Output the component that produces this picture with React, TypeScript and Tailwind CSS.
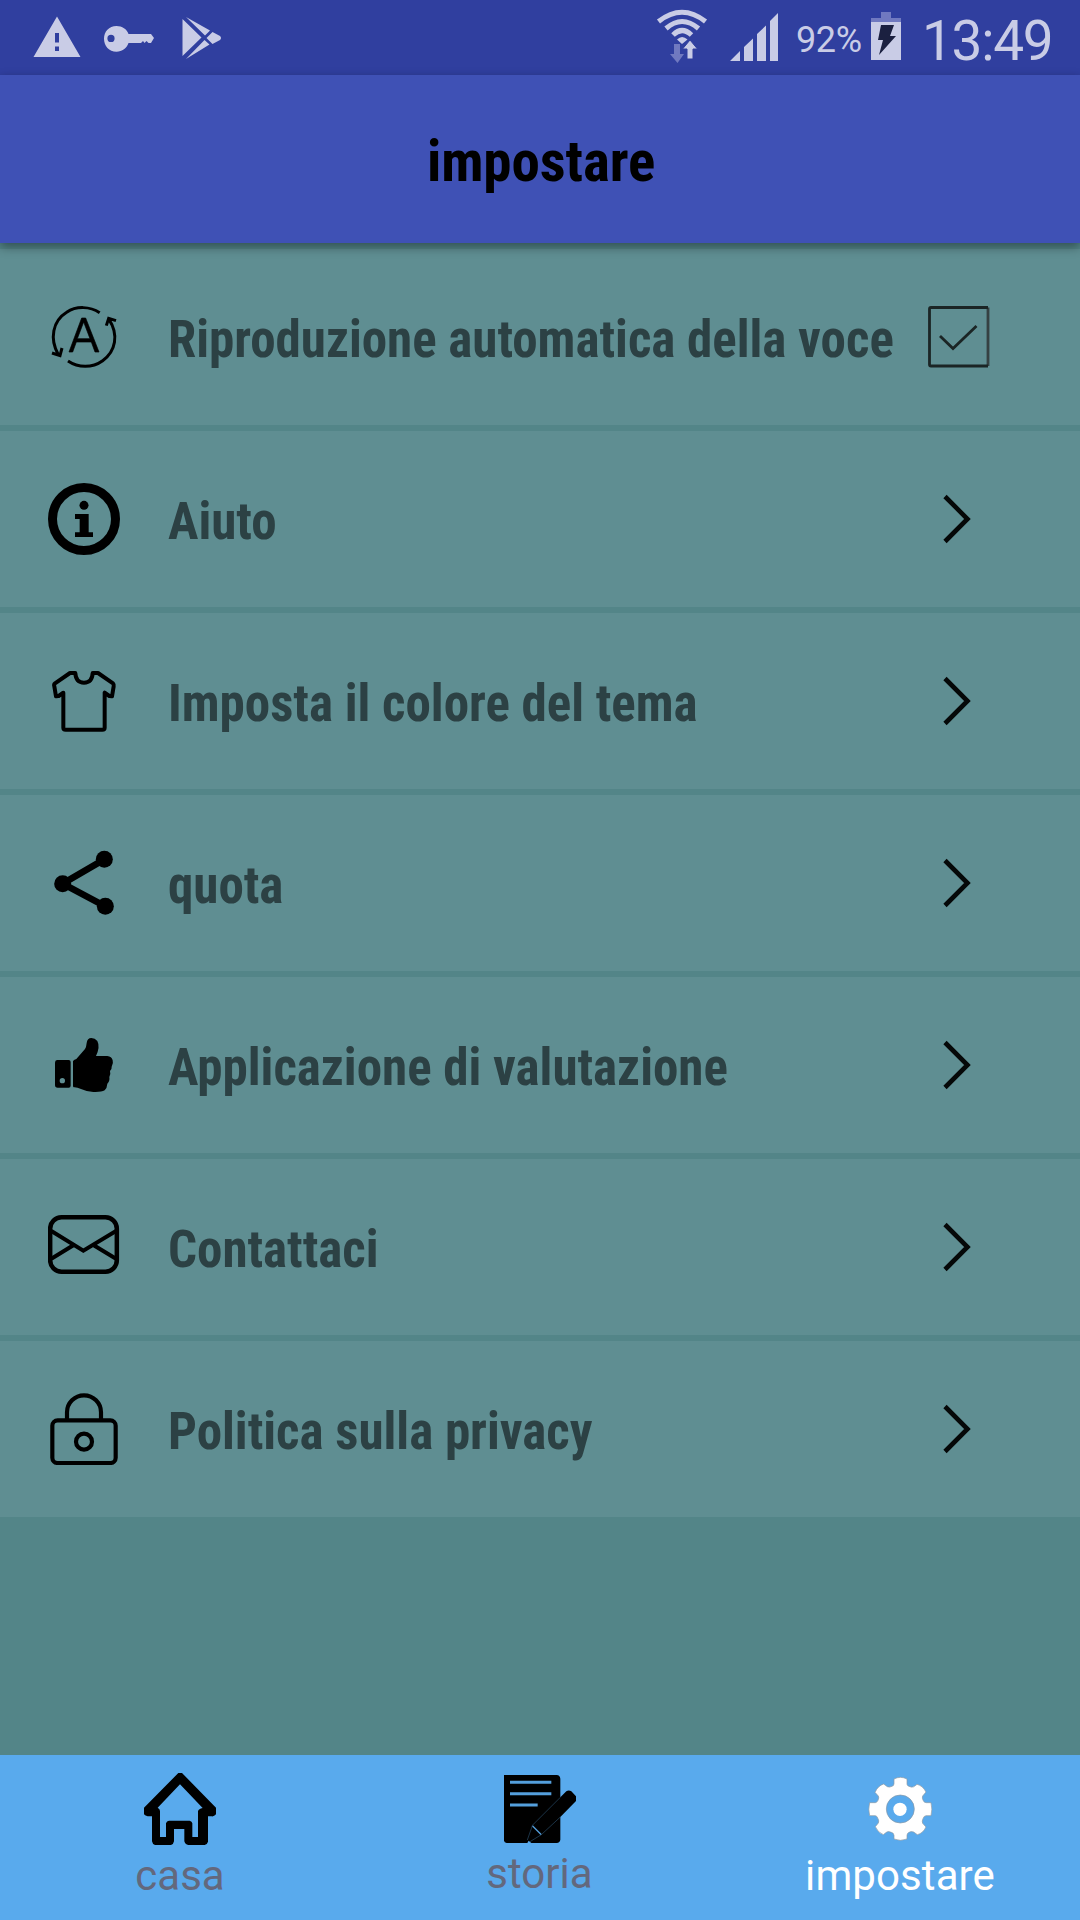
import React from "react";

const svgBase = "block h-[72px] w-[72px] shrink-0";

function AutoIcon() {
  return (
    <svg viewBox="144 93 216 216" className={svgBase} fill="none" stroke="#000" strokeWidth="9">
      <path d="M299 128C270 109 229 107 200 127C158 153 148 206 175 254M156 249L180 257L186 234" strokeLinejoin="miter" />
      <path d="M204 273C235 294 276 295 308 272C347 244 357 194 327 148M319 167L326 145L348 152" />
      <path fill="#000" stroke="#000" strokeWidth="2" d="M245 144H257L297 246H285L274 216H229L218 246H207ZM232 206H270L251 156Z" fillRule="evenodd" />
    </svg>
  );
}

function InfoIcon() {
  return (
    <svg viewBox="54 69 216 216" className={svgBase}>
      <circle cx="162" cy="177" r="94.5" fill="none" stroke="#000" strokeWidth="27" />
      <circle cx="162" cy="136" r="13.5" />
      <path d="M135 162H176V217H189V231H135V217H149V177H135Z" />
    </svg>
  );
}

function ShirtIcon() {
  return (
    <svg viewBox="54 615 216 216" className={svgBase} fill="none" stroke="#000" strokeWidth="12" strokeLinejoin="round">
      <path d="M120 639H136C137 660 147 668 162 668C177 668 187 660 188 639H204L249 670Q252 673 251 679L246 709L238 708L224 698V803Q224 809 217 809H107Q100 809 100 803V698L86 708L78 709L73 679Q71 673 75 670Z" />
    </svg>
  );
}

function ShareIcon() {
  return (
    <svg viewBox="54 81 216 216" className={svgBase}>
      <path d="M223 118L98 191L226 259" fill="none" stroke="#000" strokeWidth="20" />
      <circle cx="223" cy="118" r="25.5" />
      <circle cx="98" cy="191" r="25.5" />
      <circle cx="226" cy="259" r="25.5" />
    </svg>
  );
}

function ThumbIcon() {
  return (
    <svg viewBox="54 627 216 216" className={svgBase}>
      <path fillRule="evenodd" d="M81 720H116Q122 720 122 726V797Q122 803 116 803H83Q75 803 75 795V728Q75 720 81 720ZM97 774A8 8 0 1 0 97 790A8 8 0 1 0 97 774Z" />
      <path d="M129 724Q130 720 139 717L165 687Q169 681 170 669Q172 654 184 654Q195 654 202 663Q211 680 198 708H232Q245 709 248 721Q251 731 245 740Q246 748 240 753Q243 764 238 771Q240 783 232 791Q231 805 224 811Q214 817 190 816Q170 815 153 807Q140 801 131 802Q129 801 129 797Z" />
    </svg>
  );
}

function MailIcon() {
  return (
    <svg viewBox="54 63 216 216" className={svgBase} fill="none" stroke="#000" strokeWidth="12">
      <rect x="60.500" y="82" width="200" height="163" rx="34" strokeWidth="13.500" />
      <path d="M64 123L160 182L258 123M64 206L130 166M258 206L190 165" />
    </svg>
  );
}

function LockIcon() {
  return (
    <svg viewBox="54 609 216 216" className={svgBase} fill="none" stroke="#000" strokeWidth="12.500">
      <rect x="67" y="691" width="190" height="128" rx="16" />
      <path d="M111 690V667A51 51 0 0 1 213 667V690" />
      <circle cx="162" cy="755" r="24" />
    </svg>
  );
}

function Chevron() {
  return (
    <svg viewBox="0 0 62 62" className="block h-[62px] w-[62px]" fill="none" stroke="#050808" strokeWidth="4.600">
      <path d="M17 8.500L39.500 31L17 53.500" />
    </svg>
  );
}

function CheckBox() {
  return (
    <svg viewBox="0 0 62 62" className="block h-[62px] w-[62px]" fill="none" stroke="#1b2525" strokeWidth="2.800">
      <path d="M60 1.500V60" stroke="#354142" />
      <path d="M60 1.500H3Q1.500 1.500 1.500 3V58.500Q1.500 60 3 60H60" />
      <path d="M12 30L25 42.500L48.500 20" />
    </svg>
  );
}

const rows = [
  { label: "Riproduzione automatica della voce", icon: <AutoIcon />, check: true },
  { label: "Aiuto", icon: <InfoIcon /> },
  { label: "Imposta il colore del tema", icon: <ShirtIcon /> },
  { label: "quota", icon: <ShareIcon /> },
  { label: "Applicazione di valutazione", icon: <ThumbIcon /> },
  { label: "Contattaci", icon: <MailIcon /> },
  { label: "Politica sulla privacy", icon: <LockIcon /> },
];

function StatusBar() {
  return (
    <div className="flex h-[75px] items-start bg-[#303f9f] text-[#c9cce6]">
      <svg viewBox="0 0 240 75" className="block h-[75px] w-[240px]" fill="#c9cce6">
        <path fillRule="evenodd" d="M57 16.500L80.500 57H33.500ZM55 33V42.500H59V33ZM55 46.500V51H59V46.500Z" />
        <path fillRule="evenodd" d="M116.500 26C122 26 127 29 128.500 34H151L154 38L151 43H148.500L146.500 41L144.500 43L143 41L141 43L139 43H128.500C127 48 122 51.700 116.500 51.700C109 51.700 104 46 104 38.800C104 31.500 109 26 116.500 26ZM111 34.800A3.600 3.600 0 1 0 111 42A3.600 3.600 0 1 0 111 34.800Z" />
        <path d="M182.500 19L201.500 37.500L182.500 56ZM186 17L210 30.500L205 35.500ZM212.500 32L220 36Q222 38 220 40L212.500 44L206.500 38ZM204.500 40L209.500 44.500L186 59Z" />
      </svg>
      <div className="flex-1" />
      <svg viewBox="650 0 140 75" className="block h-[75px] w-[140px]" fill="#c9cce6">
        <g fill="none" stroke="#c9cce6" strokeWidth="5">
          <path d="M658.500 21.500Q682 3 705.500 21.500" />
          <path d="M666 28.500Q682 14.500 698.500 28.500" />
          <path d="M673 35Q682 26 691.500 35" />
        </g>
        <path d="M677 39.500Q682 34.500 687.500 39.500L682 44Z" />
        <path fill="#7079c0" d="M674 44H680V54H684L677.500 63L670 54H674Z" />
        <path stroke="#303f9f" strokeWidth="1" d="M690 40L697.500 49H693V59H687V49H682.500Z" />
        <path d="M730 61L740 51V61ZM744 61V47L753 38.500V61ZM757 61V34L766 25.500V61ZM770 61V21L778 13V61Z" />
      </svg>
      <span className="ml-[6px] mt-[19px] w-[74px] whitespace-nowrap font-[Roboto] text-[36px] leading-[42px] tracking-[-0.4px]">92%</span>
      <svg viewBox="870 0 32 75" className="block h-[75px] w-[32px]">
        <path fill="#7079c0" d="M881 12H891V18H901V22H871V18H881Z" />
        <path fill="#c9cce6" d="M871 22H901V60H871Z" />
        <path fill="#1b2040" d="M881 25H894L890 36H896L879 55L883 40H878Z" />
      </svg>
      <span className="ml-[20px] mt-[9px] w-[158px] whitespace-nowrap font-[Roboto] text-[55px] font-normal leading-[64px] tracking-[-1.3px]">13:49</span>
    </div>
  );
}

function HomeIcon() {
  return (
    <svg viewBox="432 99 216 216" className="block h-[72px] w-[72px]">
      <path fillRule="evenodd" d="M535 99H546L648 203V223Q642 230 635 229H624V305Q622 313 614 315H565Q555 313 553 304V267H522V304Q521 312 513 315H465Q457 312 456 304V229H443Q436 228 432 223V203ZM540 133L473 203Q480 207 480 213V291H498V250Q500 243 507 242H569Q576 244 577 250V291H594V214Q596 206 608 204Z" />
    </svg>
  );
}

function HistoryIcon() {
  return (
    <svg viewBox="192 99 216 216" className="block h-[72px] w-[72px]">
      <path d="M192 105H350Q360 106 361 116V172L379 154Q386 149 394 154L408 169V183L361 231V299Q360 308 350 309H200Q193 308 192 302Z" />
      <path d="M210 127H334M210 161H334M210 195H293" stroke="#549fdc" strokeWidth="9" fill="none" />
      <path d="M277 257L304 284" stroke="#549fdc" strokeWidth="4" fill="none" />
      <path d="M277 256L361 172M304 284L361 231M277 257L262 300M304 284L270 305" stroke="#294d69" strokeWidth="2" fill="none" />
      <path d="M262 309L266 302L274 309Z" fill="#59aaed" />
    </svg>
  );
}

function GearIcon() {
  return (
    <svg viewBox="252 99 216 216" className="block h-[72px] w-[72px]">
      <g fill="#fff" stroke="#8d98a3" strokeWidth="2">
        <path fillRule="evenodd" d="M342 117Q361 107 381 117V133Q382 139 393 141Q400 144 411 133Q428 137 438 156L428 168Q425 174 430 182Q432 188 439 188H453Q458 208 453 227H438Q431 228 429 236Q425 244 428 250L438 261Q429 280 412 284L401 276Q393 273 387 277Q381 280 381 286V297Q361 305 342 297V286Q341 278 334 277Q324 272 319 277L310 284Q293 277 286 260L295 249Q298 243 294 236Q292 228 286 227H269Q264 208 269 188H286Q292 187 294 181Q298 173 295 168L285 157Q294 137 311 132L322 140Q328 143 336 139Q342 137 342 131ZM361 165A42 42 0 1 0 361 249A42 42 0 1 0 361 165Z" />
        <circle cx="360" cy="208" r="20" stroke="none" />
      </g>
    </svg>
  );
}

export default function App() {
  return (
    <div className="flex h-[1920px] w-[1080px] flex-col overflow-hidden bg-[#538588]">
      <StatusBar />
      <header className="z-10 flex h-[168px] shrink-0 items-center justify-center bg-[#3f51b5] pl-[2px] pt-[6px] shadow-[0_4px_10px_rgba(0,0,0,0.4)]">
        <h1 className="whitespace-nowrap font-['Roboto_Condensed',Roboto] text-[57px] font-bold leading-[68px] tracking-[-0.1px] text-black [font-stretch:75%]">impostare</h1>
      </header>
      <main className="flex flex-1 flex-col gap-[6px] pt-[6px]">
        {rows.map((row) => (
          <div key={row.label} className="flex h-[176px] items-center bg-[#5f8e92] pl-[48px] pr-[90px]">
            {row.icon}
            <span className="ml-[48px] flex-1 whitespace-nowrap pt-[6px] font-['Roboto_Condensed',Roboto] text-[51px] font-bold leading-[60px] tracking-[-0.02px] text-[#2c4144] [font-stretch:75%]">{row.label}</span>
            {row.check ? <CheckBox /> : <Chevron />}
          </div>
        ))}
      </main>
      <nav className="grid h-[165px] grid-cols-3 bg-[#59aaed] font-[Roboto] text-[42px] leading-[48px] text-[#63687d]">
        <div className="flex flex-col items-center pt-[18px]">
          <HomeIcon />
          <span className="mt-[7px]">casa</span>
        </div>
        <div className="flex flex-col items-center pt-[18px]">
          <HistoryIcon />
          <span className="mt-[5px] pr-[1px]">storia</span>
        </div>
        <div className="flex flex-col items-center pt-[18px] text-white">
          <GearIcon />
          <span className="mt-[7px] tracking-[0.1px]">impostare</span>
        </div>
      </nav>
    </div>
  );
}
